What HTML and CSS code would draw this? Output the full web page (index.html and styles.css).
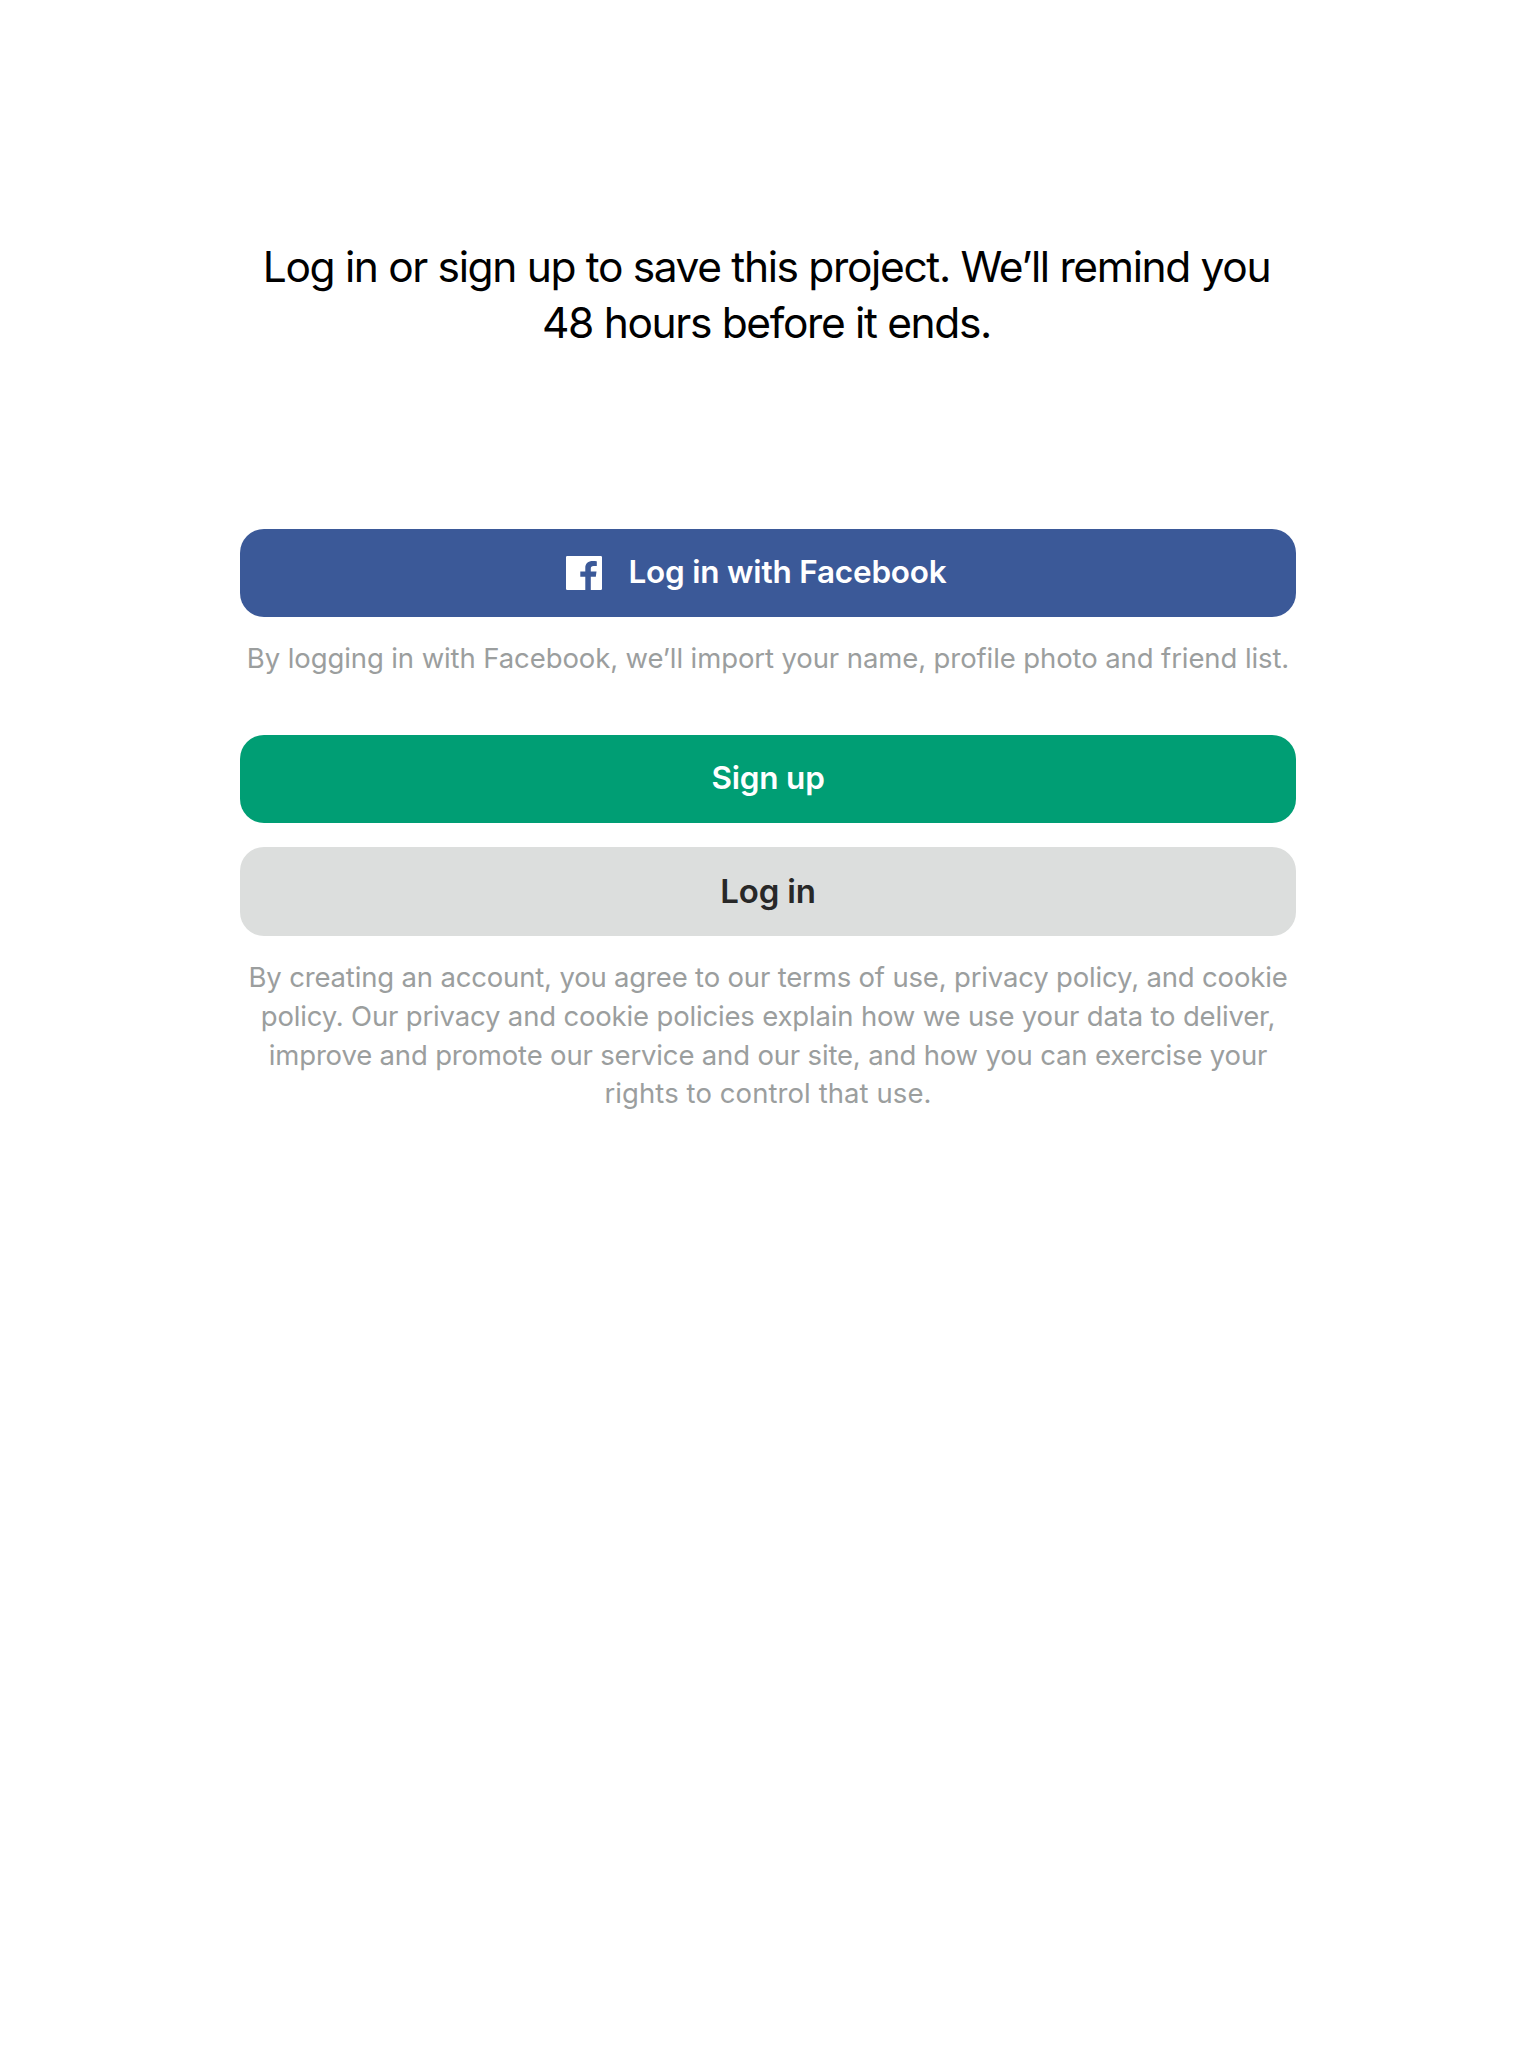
FILE: index.html
```html
<!DOCTYPE html>
<html lang="en">
<head>
<meta charset="utf-8">
<title>Log in or sign up</title>
<link rel="stylesheet" href="styles.css">
</head>
<body>
<main class="login">
  <h1 class="intent">Log in or sign up to save this project. We’ll remind you<br>48 hours before it ends.</h1>
  <button class="button facebook" type="button">
    <svg class="facebook-icon" width="36" height="34" viewBox="0 0 36 34" aria-hidden="true">
      <path fill="#fff" d="M1.2 0H34.8Q36 0 36 1.2V32.8Q36 34 34.8 34H24.8V20.8H29.8L30.5 15.6H24.8V12.6C24.8 10.9 25.5 9.9 27.7 9.9H30.8V5.2C30 5.1 28.5 5 26.8 5C22.2 5 19.3 7.7 19.3 11.8V15.6H14.3V20.8H19.3V34H1.2Q0 34 0 32.8V1.2Q0 0 1.2 0Z"/>
    </svg>
    <span>Log in with Facebook</span>
  </button>
  <p class="note">By logging in with Facebook, we’ll import your name, profile photo and friend list.</p>
  <button class="button signup" type="button">Sign up</button>
  <button class="button signin" type="button">Log in</button>
  <p class="note legal">By creating an account, you agree to our terms of use, privacy policy, and cookie<br>policy. Our privacy and cookie policies explain how we use your data to deliver,<br>improve and promote our service and our site, and how you can exercise your<br><span class="last-line">rights to control that use.</span></p>
</main>
</body>
</html>
```
FILE: styles.css
```css
* {
  box-sizing: border-box;
}

body {
  margin: 0;
  background: #fff;
  font-family: Inter, "Liberation Sans", sans-serif;
}

.login {
  display: flex;
  flex-direction: column;
  width: 1056px;
  margin: 0 auto;
  padding-top: 239px;
}

.intent {
  margin: 0 0 178px;
  padding-right: 3px;
  color: #000;
  font-size: 42.5px;
  font-weight: 400;
  letter-spacing: -1.35px;
  line-height: 56px;
  text-align: center;
  white-space: nowrap;
}

.button {
  display: flex;
  align-items: center;
  justify-content: center;
  height: 88px;
  padding: 0 0 2px;
  border: 0;
  border-radius: 24px;
  color: #fff;
  font-family: inherit;
  font-size: 31.5px;
  font-weight: 600;
  letter-spacing: -0.2px;
  line-height: 40px;
}

.facebook {
  gap: 26px;
  padding-right: 23px;
  background: #3b5998;
}

.facebook-icon {
  flex: none;
  margin-top: 2px;
}

.signup {
  background: #009e74;
}

.signin {
  height: 89px;
  margin-top: 24px;
  padding-bottom: 0;
  background: #dcdedd;
  color: #282828;
  font-size: 33px;
}

.note {
  margin: 22px 0 57px;
  color: #9b9e9e;
  font-size: 27.5px;
  letter-spacing: -0.1px;
  line-height: 38.67px;
  text-align: center;
  white-space: nowrap;
}

.legal {
  margin: 22.7px 0 0;
  letter-spacing: -0.17px;
}

.last-line {
  letter-spacing: 0.08px;
}
```
